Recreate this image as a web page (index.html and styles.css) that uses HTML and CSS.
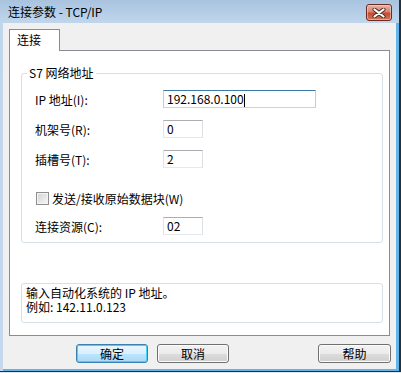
FILE: index.html
```html
<!DOCTYPE html>
<html lang="zh">
<head>
<meta charset="utf-8">
<title>连接参数 - TCP/IP</title>
<link rel="stylesheet" href="styles.css">
</head>
<body>
<div class="window">
  <div class="titlebar">
    <span class="title">连接参数 - TCP/IP</span>
    <div class="close">
      <svg width="14" height="10" viewBox="0 0 14 10">
        <path d="M2.5 1.5 L11.5 8.5 M11.5 1.5 L2.5 8.5" stroke="#4a2a24" stroke-width="4" stroke-linecap="round" fill="none"/>
        <path d="M2.5 1.5 L11.5 8.5 M11.5 1.5 L2.5 8.5" stroke="#ffffff" stroke-width="2.2" stroke-linecap="round" fill="none"/>
      </svg>
    </div>
  </div>
  <div class="client">
    <div class="tabs"><div class="tab">连接</div></div>
    <div class="panel">
      <fieldset class="group">
        <legend>S7 网络地址</legend>
        <div class="form">
          <div class="row first">
            <span class="lbl">IP 地址(I):</span>
            <div class="field wide focus">192.168.0.100<span class="caret"></span></div>
          </div>
          <div class="row">
            <span class="lbl">机架号(R):</span>
            <div class="field narrow">0</div>
          </div>
          <div class="row">
            <span class="lbl">插槽号(T):</span>
            <div class="field narrow">2</div>
          </div>
          <div class="row check">
            <span class="chk"></span>
            <span class="chktext">发送/接收原始数据块(W)</span>
          </div>
          <div class="row">
            <span class="lbl">连接资源(C):</span>
            <div class="field narrow">02</div>
          </div>
        </div>
      </fieldset>
      <div class="info">输入自动化系统的 IP 地址。<br>例如: 142.11.0.123</div>
    </div>
    <div class="buttons">
      <div class="btn default">确定</div>
      <div class="btn">取消</div>
      <div class="spacer"></div>
      <div class="btn help">帮助</div>
    </div>
  </div>
</div>
</body>
</html>
```
FILE: styles.css
```css
* { box-sizing: border-box; }
body {
  margin: 0;
  background: #dde8f3;
  font-family: "Noto Sans CJK SC", "Noto Sans", sans-serif;
  font-size: 12px;
  color: #000;
}
.window {
  width: 401px;
  height: 372px;
  display: flex;
  flex-direction: column;
  background: linear-gradient(#a9c3df 0, #c0d6ec 23px, #c5d8ec 100%);
  border-right: 2px solid #26303a;
  border-bottom: 1px solid #26303a;
}
.titlebar {
  height: 23px;
  flex: none;
  display: flex;
  align-items: center;
  padding: 0 7px 0 8px;
}
.title {
  flex: 1;
  line-height: 14px;
  font-size: 12px;
}
.close {
  align-self: flex-start;
  margin-top: 4px;
  width: 26px;
  height: 17px;
  border: 1px solid #6b2c24;
  border-radius: 3px;
  background: linear-gradient(#eab3a4 0%, #d98370 45%, #c54a33 55%, #d2785d 100%);
  display: flex;
  align-items: center;
  justify-content: center;
  box-shadow: inset 0 0 0 1px rgba(255, 220, 210, 0.5);
}
.client {
  flex: 1;
  margin-left: 3px;
  background: #f0f0f0;
  border-right: 3px solid #63b3e6;
  border-bottom: 2px solid #63b3e6;
  display: flex;
  flex-direction: column;
}
.tabs {
  display: flex;
  padding: 6px 0 0 6px;
}
.tab {
  position: relative;
  z-index: 1;
  width: 51px;
  height: 22px;
  margin-bottom: -1px;
  border: 1px solid #898c95;
  border-bottom: none;
  background: #fff;
  padding-left: 7px;
  line-height: 20px;
}
.panel {
  margin: 0 6px;
  height: 286px;
  border: 1px solid #898c95;
  background: #fff;
  padding: 16px 6px 0 11px;
}
.group {
  margin: 0;
  padding: 0 0 7px 0;
  border: 1px solid #d5dfe5;
  border-radius: 3px;
  min-width: 0;
}
.group legend {
  margin-left: 5px;
  padding: 0 2px;
  line-height: 12px;
}
.form {
  margin: 11px 0 0 13px;
  display: flex;
  flex-direction: column;
}
.row {
  display: flex;
  align-items: center;
  height: 18px;
  margin-top: 12px;
}
.row.first { margin-top: 0; }
.row.check {
  height: 13px;
  margin-top: 24px;
}
.lbl {
  width: 128px;
  line-height: 14px;
  padding-top: 1px;
}
.field {
  height: 18px;
  border: 1px solid;
  border-color: #abadb3 #dbdfe6 #e3e9ef #e2e3ea;
  background: #fff;
  padding-left: 3px;
  line-height: 16px;
  white-space: nowrap;
}
.field.focus {
  border-color: #3d7bad #b5cfe7 #b7d9ed #b5cfe7;
}
.wide { width: 153px; }
.narrow { width: 40px; }
.caret {
  display: inline-block;
  width: 1px;
  height: 13px;
  background: #000;
  vertical-align: middle;
}
.chk {
  width: 13px;
  height: 13px;
  margin-left: 1px;
  border: 1px solid #8e8f8f;
  background: linear-gradient(135deg, #d4d4d4, #f6f6f6);
  box-shadow: inset 0 0 0 1px #f4f4f4;
}
.chktext {
  margin-left: 3px;
  line-height: 14px;
}
.info {
  margin-top: 40px;
  height: 40px;
  border: 1px solid #d5dfe5;
  border-radius: 3px;
  padding: 2px 0 0 4px;
  line-height: 14px;
}
.buttons {
  display: flex;
  padding: 8px 5px 0 73px;
  gap: 9px;
}
.spacer { flex: 1; }
.btn {
  width: 72px;
  height: 19px;
  border: 1px solid #707070;
  border-radius: 3px;
  background: linear-gradient(#f2f2f2 0%, #ebebeb 50%, #dddddd 51%, #cfcfcf 100%);
  box-shadow: inset 0 0 0 1px #fcfcfc;
  text-align: center;
  line-height: 17px;
}
.btn.default {
  border-color: #3c7fb1;
  background: linear-gradient(#eaf6fd 0%, #d9f0fc 50%, #bee6fd 51%, #a7d9f5 100%);
  box-shadow: inset 0 0 0 1px #48d0f8;
}
.btn.help { width: 73px; }
```
